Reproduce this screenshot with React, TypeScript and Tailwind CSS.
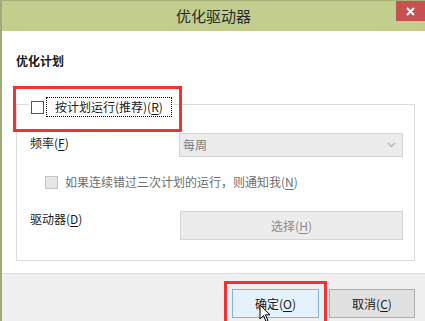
import React from "react";

const font = { fontFamily: '"Noto Sans CJK SC", "Noto Sans", sans-serif' };

function U({ c }: { c: string }) {
  return <span className="underline underline-offset-[2px] decoration-[1px]">{c}</span>;
}

export default function App() {
  return (
    <div
      className="w-[425px] h-[321px] overflow-hidden relative flex flex-col bg-white border-l-2 border-[#a3a97a] text-[#1a1a1a]"
      style={font}
    >
      {/* Title bar */}
      <div className="h-[31px] shrink-0 bg-[#c3cd8d] border-t border-[#a9b07c] grid grid-cols-[29px_1fr_29px]">
        <div />
        <div className="flex items-center justify-center text-[15px] leading-[20px] text-[#2a2a2a] pb-[1px]">
          优化驱动器
        </div>
        <div className="h-[20px] bg-[#c75050] flex items-center justify-center">
          <svg width="9" height="9" viewBox="0 0 9 9">
            <path d="M1 1 L8 8 M8 1 L1 8" stroke="white" strokeWidth="2" />
          </svg>
        </div>
      </div>

      {/* Content */}
      <div className="shrink-0 pt-[22px] pb-[12px]">
        <div className="pl-[14px] text-[12px] leading-[16px] font-bold">优化计划</div>
        <div className="mt-[35px] ml-[14px] w-[399px] h-[157px] border border-[#dcdcdc]">
          {/* legend */}
          <div className="-mt-[8px] ml-[12px] w-fit bg-white flex items-center pl-[2px] pr-[1px] h-[20px]">
            <div className="w-[13px] h-[13px] border border-[#555555] bg-white" />
            <div className="ml-[2px] h-[20px] border border-dotted border-black px-[8px] flex items-center text-[12px] leading-[16px]">
              按计划运行(推荐)(<U c="R" />)
            </div>
          </div>

          {/* frequency */}
          <div className="mt-[16px] flex items-start pl-[13px]">
            <div className="w-[149px] mt-[2px] text-[12px] leading-[16px]">
              频率(<U c="F" />)
            </div>
            <div className="w-[224px] h-[24px] bg-[#ececec] border border-[#d4d4d4] flex items-center justify-between pl-[3px] pr-[6px] text-[12px] text-[#7a7a7a]">
              <span>每周</span>
              <svg width="9" height="6" viewBox="0 0 9 6">
                <path d="M1 1 L4.5 4.5 L8 1" fill="none" stroke="#b5b5b5" strokeWidth="1.3" />
              </svg>
            </div>
          </div>

          {/* notify */}
          <div className="mt-[17px] h-[16px] flex items-center pl-[28px]">
            <div className="w-[13px] h-[13px] bg-[#e6e6e6] border border-[#c4c4c4]" />
            <div className="ml-[7px] text-[12px] leading-[16px] text-[#6d6d6d]">
              如果连续错过三次计划的运行，则通知我(<U c="N" />)
            </div>
          </div>

          {/* driver */}
          <div className="mt-[21px] flex items-start pl-[13px]">
            <div className="w-[150px] text-[12px] leading-[16px]">
              驱动器(<U c="D" />)
            </div>
            <div className="w-[223px] h-[29px] bg-[#ececec] border border-[#d4d4d4] flex items-center justify-center text-[12px] text-[#8a8a8a]">
              选择(<U c="H" />)
            </div>
          </div>
        </div>
      </div>

      {/* Footer */}
      <div className="flex-1 bg-[#f0f0f0] border-t border-[#dfdfdf] flex justify-end items-start gap-[10px] pr-[10px] pt-[15px]">
        <div className="w-[87px] h-[29px] bg-[#e5f1fb] border border-[#7eb4ea] flex items-center justify-center text-[12px]">
          确定(<U c="O" />)
        </div>
        <div className="w-[86px] h-[29px] bg-[#e1e1e1] border border-[#adadad] flex items-center justify-center text-[12px]">
          取消(<U c="C" />)
        </div>
      </div>

      {/* Annotation overlays */}
      <div className="absolute left-[11px] top-[86px] w-[169px] h-[46px] border-[3px] border-[#f03434] pointer-events-none" />
      <div className="absolute left-[222px] top-[281px] w-[103px] h-[50px] border-[3px] border-[#f03434] pointer-events-none" />

      {/* Cursor */}
      <svg className="absolute left-[257px] top-[304px]" width="14" height="20" viewBox="0 0 14 20">
        <path d="M1 1 L1 15 L4.5 11.5 L7 17.5 L9 16.5 L6.5 10.8 L11 10.8 Z" fill="white" stroke="black" strokeWidth="1" strokeLinejoin="miter" />
      </svg>
    </div>
  );
}
